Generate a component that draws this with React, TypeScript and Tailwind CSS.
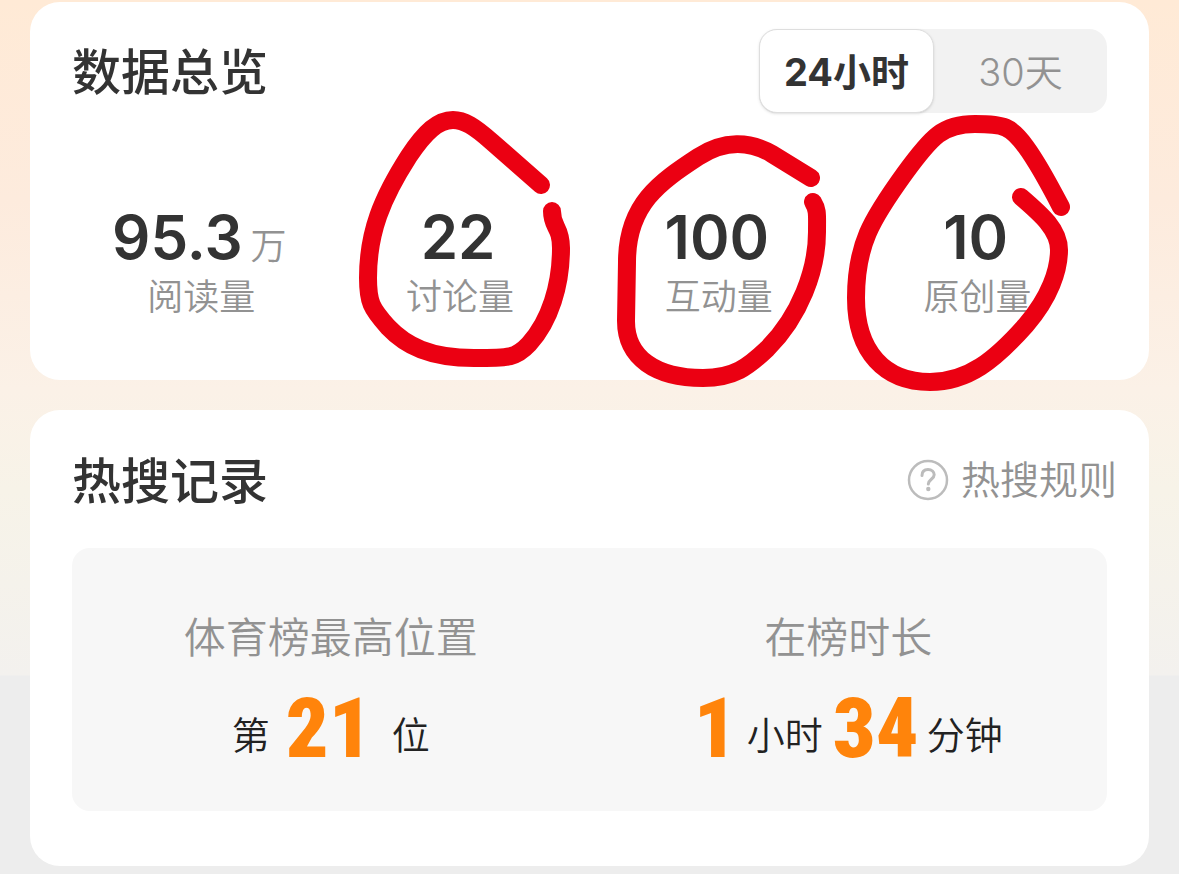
import { useState } from 'react';
import type { FC, ReactNode } from 'react';

interface Stat {
    label: string;
    value: string;
    unit?: string;
    mark?: { viewBox: string; path: string };
}

const stats: Stat[] = [
    { label: '阅读量', value: '95.3', unit: '万' },
    {
        label: '讨论量',
        value: '22',
        mark: {
            viewBox: '330 100 260 300',
            path: 'M541 185 L492 142 C474 126 464 120 453 120 C438 120 425 132 409 156 C382 198 368 232 368 278 C368 302 371 308 388 327 C406 346 430 358 474 358 C510 358 516 358 529 344 C550 321 561 285 561 248 C561 226 552 228 552 211',
        },
    },
    {
        label: '互动量',
        value: '100',
        mark: {
            viewBox: '589 100 260 300',
            path: 'M811 178 L772 154 C750 141 724 140 698 157 C660 182 627 204 627 262 L626 321 C626 358 656 378 703 378 C734 378 748 367 767 349 C800 316 817 270 817 232 C817 215 818 210 813 202',
        },
    },
    {
        label: '原创量',
        value: '10',
        mark: {
            viewBox: '848 100 260 300',
            path: 'M1061 207 C1048 182 1037 162 1026 147 C1011 126 1004 124 975 124 C943 124 932 136 905 173 C871 220 856 245 856 298 C856 352 885 382 930 382 C968 382 995 360 1026 325 C1050 297 1059 270 1059 250 C1059 230 1042 215 1021 197',
        },
    },
];

const ranges = ['24小时', '30天'];

const Title: FC<{ children: ReactNode }> = ({ children }) => (
    <h2 className="pt-1 text-[49px] leading-[60px] font-medium text-[#333]">{children}</h2>
);

const StatCell: FC<{ stat: Stat }> = ({ stat }) => (
    <div className="relative flex flex-col items-center">
        <dd className="order-1 pr-1 text-[60px] leading-[60px] font-semibold text-[#333]">
            {stat.value}
            {stat.unit && <span className="ml-2 text-[36px] leading-none font-[350] text-[#929292]">{stat.unit}</span>}
        </dd>
        <dt className="order-2 pt-0.5 text-[36px] leading-[56px] font-[350] text-[#929292]">{stat.label}</dt>

        {/* hand-drawn marker loop over the number */}
        {stat.mark && (
            <svg
                className="pointer-events-none absolute -top-[107px] left-1/2 z-10 h-[300px] w-[260px] -translate-x-1/2 overflow-visible"
                viewBox={stat.mark.viewBox}
                fill="none"
                stroke="#eb0012"
                strokeWidth="18"
                strokeLinecap="round"
                strokeLinejoin="round"
                aria-hidden="true"
            >
                <path d={stat.mark.path} />
            </svg>
        )}
    </div>
);

const Big: FC<{ children: ReactNode }> = ({ children }) => (
    <span className="font-['Liberation_Sans_Narrow','Roboto_Condensed',sans-serif] text-[84px] leading-[84px] font-black text-[#ff840b]">
        {children}
    </span>
);

const App: FC = () => {
    const [range, setRange] = useState(ranges[0]);

    return (
        <main className="flex min-h-screen flex-col gap-[30px] bg-[#ededed] bg-[linear-gradient(#ffead6_0px,#fdebdd_200px,#fbf1e7_390px,#f7f3e8_490px,#f3f1ee_675px,#ededed_676px)] px-[30px] pt-0.5 pb-2 font-['Inter','Noto_Sans_CJK_SC',sans-serif]">
            <section className="rounded-[30px] bg-white px-[42px] pt-[27px] pb-[55px]">
                <div className="flex items-center justify-between">
                    <Title>数据总览</Title>
                    <div className="flex h-[84px] rounded-[18px] bg-[#f2f2f2]">
                        {ranges.map((item) => (
                            <button
                                key={item}
                                type="button"
                                aria-pressed={item === range}
                                onClick={() => setRange(item)}
                                className={
                                    item === range
                                        ? 'w-[175px] rounded-[18px] border border-[#dedede] bg-white pt-0.5 text-[38px] font-bold text-[#333] shadow-sm'
                                        : 'w-[173px] rounded-[18px] pt-0.5 text-[38px] font-[350] text-[#929292]'
                                }
                            >
                                {item}
                            </button>
                        ))}
                    </div>
                </div>
                <dl className="mt-[94px] grid grid-cols-4">
                    {stats.map((stat) => (
                        <StatCell key={stat.label} stat={stat} />
                    ))}
                </dl>
            </section>

            <section className="rounded-[30px] bg-white pt-[38px] pb-[55px]">
                <div className="flex items-center justify-between pr-8 pl-[42px]">
                    <Title>热搜记录</Title>
                    <a href="#rules" className="flex items-center gap-3 text-[39px] leading-[60px] font-[350] text-[#929292]">
                        <svg className="size-[42px]" viewBox="0 0 42 42" fill="none" stroke="#bcbcbc" aria-hidden="true">
                            <circle cx="21" cy="21" r="19" strokeWidth="2.5" />
                            <path
                                d="M15 16.5 C15 12.5 17.5 10.5 21 10.5 C24.8 10.5 27.2 12.8 27.2 15.8 C27.2 20 21.3 20.5 21.3 25"
                                strokeWidth="3"
                                strokeLinecap="round"
                            />
                            <circle cx="21.3" cy="30" r="2.2" fill="#bcbcbc" stroke="none" />
                        </svg>
                        热搜规则
                    </a>
                </div>

                <div className="mx-[42px] mt-9 grid grid-cols-2 rounded-[18px] bg-[#f7f7f7] pt-[59px] pb-10 text-center">
                    <div>
                        <h3 className="text-[42px] leading-[62px] font-[350] text-[#929292]">体育榜最高位置</h3>
                        <p className="mt-[18px] flex items-center justify-center text-[38px] font-[350] text-[#222]">
                            <span className="mr-4 pt-3">第</span>
                            <Big>21</Big>
                            <span className="ml-5 pt-3">位</span>
                        </p>
                    </div>
                    <div>
                        <h3 className="text-[42px] leading-[62px] font-[350] text-[#929292]">在榜时长</h3>
                        <p className="mt-[18px] flex items-center justify-center text-[38px] font-[350] text-[#222]">
                            <Big>1</Big>
                            <span className="mx-2.5 pt-3">小时</span>
                            <Big>34</Big>
                            <span className="ml-2 pt-3">分钟</span>
                        </p>
                    </div>
                </div>
            </section>
        </main>
    );
};

export default App;
